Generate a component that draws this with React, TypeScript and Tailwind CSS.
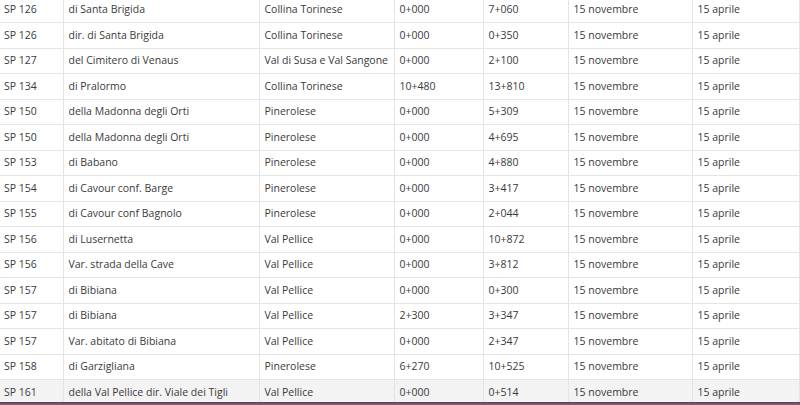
const rows: string[][] = [
  ["SP 126", "di Santa Brigida", "Collina Torinese", "0+000", "7+060"],
  ["SP 126", "dir. di Santa Brigida", "Collina Torinese", "0+000", "0+350"],
  ["SP 127", "del Cimitero di Venaus", "Val di Susa e Val Sangone", "0+000", "2+100"],
  ["SP 134", "di Pralormo", "Collina Torinese", "10+480", "13+810"],
  ["SP 150", "della Madonna degli Orti", "Pinerolese", "0+000", "5+309"],
  ["SP 150", "della Madonna degli Orti", "Pinerolese", "0+000", "4+695"],
  ["SP 153", "di Babano", "Pinerolese", "0+000", "4+880"],
  ["SP 154", "di Cavour conf. Barge", "Pinerolese", "0+000", "3+417"],
  ["SP 155", "di Cavour conf Bagnolo", "Pinerolese", "0+000", "2+044"],
  ["SP 156", "di Lusernetta", "Val Pellice", "0+000", "10+872"],
  ["SP 156", "Var. strada della Cave", "Val Pellice", "0+000", "3+812"],
  ["SP 157", "di Bibiana", "Val Pellice", "0+000", "0+300"],
  ["SP 157", "di Bibiana", "Val Pellice", "2+300", "3+347"],
  ["SP 157", "Var. abitato di Bibiana", "Val Pellice", "0+000", "2+347"],
  ["SP 158", "di Garzigliana", "Pinerolese", "6+270", "10+525"],
  ["SP 161", "della Val Pellice dir. Viale dei Tigli", "Val Pellice", "0+000", "0+514"],
];

export default function App() {
  return (
    <div className="h-screen flex flex-col overflow-hidden bg-white text-[10.5px] text-[#3a3a3a]" style={{ fontFamily: '"Open Sans", sans-serif' }}>
      <div className="flex-1 overflow-hidden">
        <table className="-mt-[3.5px] w-[799px] border-collapse table-fixed">
          <colgroup>
            <col className="w-[63px]" />
            <col className="w-[196px]" />
            <col className="w-[135px]" />
            <col className="w-[89px]" />
            <col className="w-[85px]" />
            <col className="w-[124px]" />
            <col className="w-[107px]" />
          </colgroup>
          <tbody>
            {rows.map((r, i) => (
              <tr key={i} className={`h-[25.5px] ${i === rows.length - 1 ? "bg-[#f3f3f3]" : ""}`}>
                {[...r, "15 novembre", "15 aprile"].map((c, j) => (
                  <td key={j} className={`border border-[#e4e4e4] pt-px pb-0 pr-1 whitespace-nowrap ${j === 0 ? "pl-[4px] border-l-0" : "pl-[5px]"}`}>
                    {c}
                  </td>
                ))}
              </tr>
            ))}
          </tbody>
        </table>
      </div>
      <div className="h-[3px] shrink-0 bg-gradient-to-b from-[#5c3a4c] to-[#8a6a7a]" />
    </div>
  );
}
